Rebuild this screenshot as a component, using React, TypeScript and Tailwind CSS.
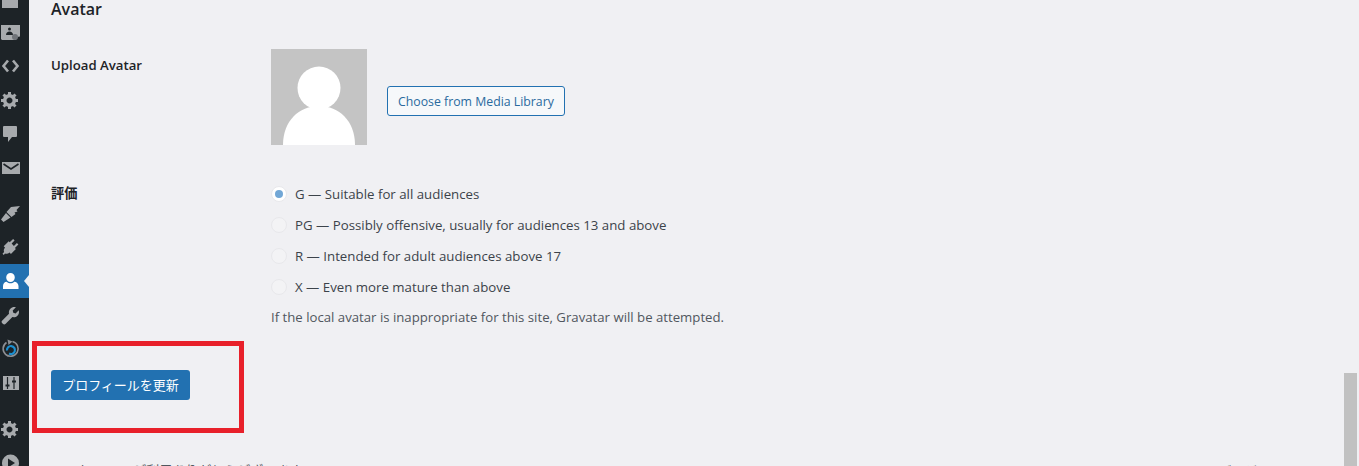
const ink = "#3c434a";

const Gear = () => (
  <svg viewBox="0 0 20 20" className="h-[20px] w-[20px] fill-[#a7aaad]">
    <path d="M18 12h-2.180c-.17.7-.44 1.350-.81 1.930l1.540 1.540-2.100 2.100-1.540-1.540c-.58.36-1.230.63-1.910.79V19H8v-2.180c-.68-.16-1.330-.43-1.910-.79l-1.540 1.540-2.120-2.120 1.540-1.540c-.36-.58-.63-1.230-.79-1.910H1V9.030h2.170c.16-.7.44-1.350.8-1.940L2.430 5.550l2.100-2.100 1.540 1.540c.58-.37 1.240-.64 1.930-.81V2h3v2.180c.68.16 1.330.43 1.910.79l1.540-1.540 2.120 2.120-1.540 1.540c.36.59.64 1.240.8 1.940H18V12zm-8.500 1.500c1.660 0 3-1.340 3-3s-1.340-3-3-3-3 1.340-3 3 1.340 3 3 3z" />
  </svg>
);

const MenuIcon = ({ h, active, children }: { h: number; active?: boolean; children: React.ReactNode }) => (
  <div
    className={`relative flex w-full items-center justify-center pr-[9px] ${active ? "bg-[#2271b1]" : ""}`}
    style={{ height: h }}
  >
    {children}
    {active && (
      <span className="absolute right-0 top-1/2 -mt-[6px] h-0 w-0 border-y-[6px] border-r-[5px] border-y-transparent border-r-[#f0f0f3]" />
    )}
  </div>
);

const Sidebar = () => (
  <aside className="flex h-[466px] w-[29px] shrink-0 flex-col items-center overflow-hidden bg-[#1d2327]">
    <div className="-mt-[19px] flex w-full flex-col">
      <MenuIcon h={34}>
        <div className="h-[20px] w-[16px] bg-[#a7aaad]" />
      </MenuIcon>
      <MenuIcon h={34}>
        <svg viewBox="0 0 20 20" className="h-[20px] w-[20px]">
          <path fill="#a7aaad" d="M1 3h19v11.500l-3 .5-1 3H2l-1-1z" />
          <path fill="#1d2327" d="M9.500 5.500a1.500 1.500 0 1 1 0 3 1.500 1.500 0 0 1 0-3zM6 13c0-2 1.500-3.500 3.500-3.500S13 11 13 13z" />
          <circle cx="15" cy="15" r="3" fill="#6f7378" />
        </svg>
      </MenuIcon>
      <MenuIcon h={34}>
        <svg viewBox="0 0 20 20" className="h-[20px] w-[20px] fill-none stroke-[#a7aaad] stroke-[2.600]">
          <path d="M8 4.500 3.500 10 8 15.500M13 4.500l4.500 5.500-4.500 5.500" />
        </svg>
      </MenuIcon>
      <MenuIcon h={34}>
        <Gear />
      </MenuIcon>
      <MenuIcon h={34}>
        <svg viewBox="0 0 20 20" className="h-[20px] w-[20px] fill-[#a7aaad]">
          <path d="M4 2h12a1 1 0 0 1 1 1v9a1 1 0 0 1-1 1h-4l-4 5v-5H4a1 1 0 0 1-1-1V3a1 1 0 0 1 1-1z" />
        </svg>
      </MenuIcon>
      <MenuIcon h={44}>
        <svg viewBox="0 0 20 20" className="-mt-[10px] h-[20px] w-[20px]">
          <rect x="2" y="4" width="18" height="12" fill="#a7aaad" />
          <path d="M3.500 6 11 11l7.500-5" fill="none" stroke="#1d2327" strokeWidth="1.600" />
        </svg>
      </MenuIcon>
      <MenuIcon h={35}>
        <svg viewBox="0 0 20 20" className="h-[20px] w-[20px] fill-[#a7aaad]">
          <path d="M20 3 11 4 6.500 9l5 5 4-3-1-1.500 3-1-1-1.500zM6 10 1 16.500 3.500 19l7-4.500z" />
        </svg>
      </MenuIcon>
      <MenuIcon h={34}>
        <svg viewBox="0 0 20 20" className="h-[20px] w-[20px] fill-[#a7aaad]">
          <path d="m13.100 2.100 1.500 1.500-3 3 2.300 2.300 3-3 1.500 1.500-3.500 3.500 1 1-5 5-1.300-1.300c-1.500 1.200-3 1.500-4.600.9L3.800 18 2.500 16.700l1.600-1.600c-.6-1.500-.3-3.100.9-4.600L3.700 9.200l5-5 1 1z" />
        </svg>
      </MenuIcon>
      <MenuIcon h={34} active>
        <svg viewBox="0 0 20 20" className="h-[20px] w-[20px] fill-white">
          <path d="M10.500 2a4.300 4.300 0 0 1 4.300 4.400c0 2.500-1.900 4.600-4.300 4.600S6.200 8.900 6.200 6.400A4.300 4.300 0 0 1 10.500 2zM6.800 10.800c1 1 2.300 1.500 3.700 1.500s2.700-.5 3.700-1.500c2.300 0 4.300 2 4.300 4.300V18H3v-2.900c0-2.300 1.500-4.300 3.800-4.300z" />
        </svg>
      </MenuIcon>
      <MenuIcon h={34}>
        <svg viewBox="0 0 20 20" className="h-[20px] w-[20px] fill-[#a7aaad]">
          <path d="M18.700 5.200c.7 2 .2 4.100-1.300 5.500-1.300 1.300-3.200 1.800-5 1.400l-6.700 6.700a2 2 0 0 1-2.900 0l-.5-.5a2 2 0 0 1 0-2.900l6.700-6.700c-.4-1.800.1-3.700 1.400-5C11.800 2.200 13.900 1.700 15.900 2.300L12.700 5.500l.6 2.300 2.300.6z" />
        </svg>
      </MenuIcon>
      <MenuIcon h={34}>
        <svg viewBox="0 0 20 20" className="h-[20px] w-[20px] fill-none">
          <path d="M6.500 3.500a7.500 7.500 0 1 0 6-1" stroke="#8c8f94" strokeWidth="1.600" />
          <path d="M7.500 .5 12.500 2.500 8.500 6z" fill="#8c8f94" />
          <path d="M7 11.500a4 4 0 1 1 2 3" stroke="#1b8fd0" strokeWidth="2.200" />
        </svg>
      </MenuIcon>
      <MenuIcon h={45}>
        <svg viewBox="0 0 20 20" className="-mt-[11px] h-[20px] w-[20px]">
          <rect x="3" y="3" width="16" height="14" fill="#a7aaad" />
          <path d="M7.500 4v12M14 4v12" stroke="#1d2327" strokeWidth="1.200" />
          <path d="M5.500 12.500h4M12 8.500h4" stroke="#1d2327" strokeWidth="1.800" />
        </svg>
      </MenuIcon>
      <MenuIcon h={35}>
        <Gear />
      </MenuIcon>
      <MenuIcon h={34}>
        <svg viewBox="0 0 20 20" className="h-[20px] w-[20px]">
          <circle cx="10.500" cy="10" r="8.500" fill="#a7aaad" />
          <path d="M8 5.500v9l7-4.500z" fill="#1d2327" />
        </svg>
      </MenuIcon>
    </div>
  </aside>
);

const ratings = [
  "G — Suitable for all audiences",
  "PG — Possibly offensive, usually for audiences 13 and above",
  "R — Intended for adult audiences above 17",
  "X — Even more mature than above",
];

const Radio = ({ checked }: { checked: boolean }) => (
  <span
    className={`flex h-[16px] w-[16px] shrink-0 items-center justify-center rounded-full border border-[#e8e8eb] ${
      checked ? "bg-white" : "bg-[#f3f3f5]"
    }`}
  >
    {checked && <span className="h-[8px] w-[8px] rounded-full bg-[#72a7d6]" />}
  </span>
);

export default function App() {
  return (
    <div
      className="relative flex h-[466px] w-[1359px] overflow-hidden bg-[#f0f0f3] text-[13.2px]"
      style={{ fontFamily: '"Open Sans", "Noto Sans CJK JP", sans-serif', color: ink }}
    >
      <Sidebar />

      <main className="relative flex min-w-0 flex-1 flex-col overflow-hidden pl-[22px]">
        <h2 className="h-[49px] shrink-0 text-[16px] font-semibold leading-[18px] text-[#1d2327]">Avatar</h2>

        <section className="flex h-[96px] shrink-0">
          <div className="w-[220px] pt-[6px] font-semibold leading-[20px] text-[#1d2327]">Upload Avatar</div>
          <div className="flex items-start gap-[20px]">
            <svg viewBox="0 0 96 96" className="h-[96px] w-[96px]">
              <rect width="96" height="96" fill="#c4c4c4" />
              <circle cx="48" cy="39" r="21.500" fill="#fff" />
              <path d="M12 96c0-24 16-39 36-39s36 15 36 39z" fill="#fff" />
            </svg>
            <button className="mt-[37px] h-[30px] rounded-[3px] border border-[#2271b1] bg-[#f6f8fa] px-[10px] pt-[1px] text-[12.3px] leading-[27px] text-[#2a6a9e]">
              Choose from Media Library
            </button>
          </div>
        </section>

        <section className="mt-[34px] flex shrink-0">
          <div className="w-[220px] pt-[4px] font-semibold leading-[20px] text-[#1d2327]">評価</div>
          <div className="flex flex-col">
            <div className="flex flex-col gap-[11px] pt-[5px] text-[13.25px]">
              {ratings.map((r, i) => (
                <label key={r} className="flex h-[20px] items-center gap-[8px] leading-[20px]">
                  <Radio checked={i === 0} />
                  {r}
                </label>
              ))}
            </div>
            <p className="mt-[10px] leading-[20px] text-[#50575e]">
              If the local avatar is inappropriate for this site, Gravatar will be attempted.
            </p>
          </div>
        </section>

        <div className="mt-[43px] shrink-0">
          <button className="h-[30px] w-[139px] rounded-[3px] bg-[#2271b1] text-[13px] leading-[30px] text-white">
            プロフィールを更新
          </button>
        </div>

        <footer className="mt-[60px] flex shrink-0 justify-between pr-[28px] text-[13px] leading-[20px] text-[#50575e]">
          <span>WordPress のご利用ありがとうございます。</span>
          <span>バージョン 6.1.1</span>
        </footer>

        {/* red marker drawn on top of the screenshot */}
        <div className="absolute left-[3px] top-[341px] h-[92px] w-[212px] border-[5px] border-[#e8202a]" />
      </main>

      {/* scrollbar */}
      <div className="w-[15px] shrink-0">
        <div className="mt-[373px] h-[93px] w-[13px] bg-[#c1c1c1]" />
      </div>
    </div>
  );
}
